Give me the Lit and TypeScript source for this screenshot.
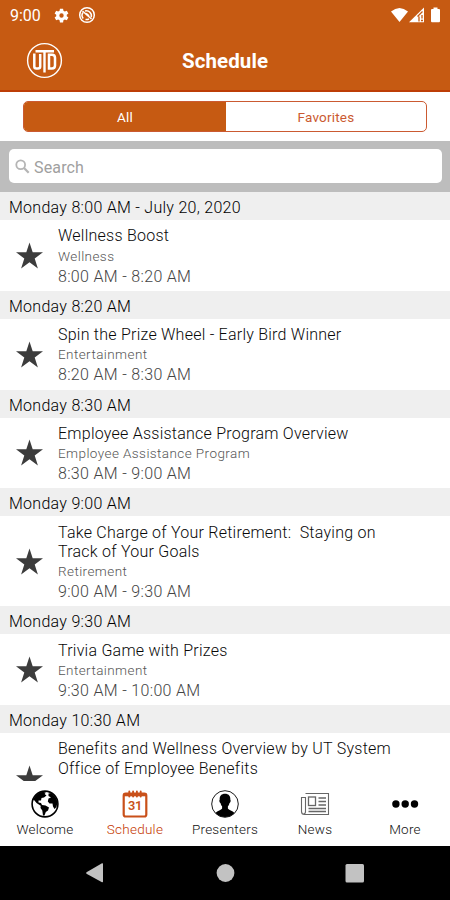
import { LitElement, html, css, svg } from "lit";
import { customElement, property } from "lit/decorators.js";

interface Session {
  slot: string;
  title: string[];
  category: string;
  time: string;
}

const SESSIONS: Session[] = [
  { slot: "Monday 8:00 AM - July 20, 2020", title: ["Wellness Boost"], category: "Wellness", time: "8:00 AM - 8:20 AM" },
  { slot: "Monday 8:20 AM", title: ["Spin the Prize Wheel - Early Bird Winner"], category: "Entertainment", time: "8:20 AM - 8:30 AM" },
  { slot: "Monday 8:30 AM", title: ["Employee Assistance Program Overview"], category: "Employee Assistance Program", time: "8:30 AM - 9:00 AM" },
  { slot: "Monday 9:00 AM", title: ["Take Charge of Your Retirement:\u00a0 Staying on", "Track of Your Goals"], category: "Retirement", time: "9:00 AM - 9:30 AM" },
  { slot: "Monday 9:30 AM", title: ["Trivia Game with Prizes"], category: "Entertainment", time: "9:30 AM - 10:00 AM" },
  { slot: "Monday 10:30 AM", title: ["Benefits and Wellness Overview by UT System", "Office of Employee Benefits"], category: "", time: "" },
];

const TAB_ICONS: Record<string, unknown> = {
  Welcome: svg`<circle cx="15" cy="14" r="12.9" fill="#fff" stroke="#000" stroke-width="1.6"/>
    <path d="M3 9.5C5 5.5 8 2.600 12.500 1.700L16 2.500L14.600 4L16.500 5.500L14 7.500L11.500 8L11 10.500L8.500 10.500L8.500 12.500L11 13L12 15L15.500 15.500L19 17.500L18 20.500L15.800 22L14.500 25.500L13 25.500L12.300 20.500L10.500 18L10.700 15.800L6.500 13L4.500 10.500Z" fill="#000"/>
    <path d="M18.500 3.500L21.500 3L25.500 7L27.600 12L26.500 17L24.500 19L23 16.500L22.500 13.500L19.500 13.500L17.800 11.500L18.500 8.500L21 7.500L18.500 6Z" fill="#000"/>`,
  Schedule: svg`<rect x="3.700" y="3.700" width="22.600" height="22.800" rx="2" fill="#fff" stroke="#c9501a" stroke-width="2.200"/>
    <path d="M3.500 3.500h23v2.800h-23z" fill="#c9501a"/>
    <path d="M9.300 1.500v5M13.100 1.500v5M16.900 1.500v5M20.700 1.500v5" stroke="#c9501a" stroke-width="1.900" stroke-linecap="round"/>
    <text x="15" y="20" text-anchor="middle" font-family="Roboto, sans-serif" font-weight="600" font-size="12.800" letter-spacing="-.3" fill="#c9501a">31</text>`,
  Presenters: svg`<circle cx="15" cy="14" r="13.300" fill="#fff" stroke="#000" stroke-width=".9"/>
    <path d="M15 3.800c-3.900 0-5.600 2.500-5.300 6-.7.300-.3 2.700.8 3.100.3 1.600.9 2.700 1.600 3.400v2.200c-.8 1.700-4.700 2-6.600 4.500a13.200 13.200 0 0 0 19 0c-1.900-2.500-5.800-2.800-6.600-4.500v-2.200c.7-.7 1.300-1.800 1.600-3.400 1.100-.4 1.500-2.800.8-3.100.3-3.500-1.400-6-5.300-6z" fill="#000"/>`,
  News: svg`<g fill="none" stroke="#666" stroke-width="1.100"><path d="M5.500 3.500H28.500V24.500H4.500Q1.500 24.500 1.500 21.500V7.500H5.500V21.500Q5.500 24 3.500 24"/>
    <rect x="8.500" y="7" width="7" height="8.500" stroke-width="1.300"/>
    <path stroke-width="1.300" d="M18.500 8H26M18.500 11.500H26M18.500 15H26M8.500 18.500H26M8.500 21.500H26"/></g>`,
  More: svg`<g fill="#000"><circle cx="5.900" cy="14" r="3.700"/><circle cx="15.200" cy="14" r="3.700"/><circle cx="24.500" cy="14" r="3.700"/></g>`,
};

@customElement("session-row")
class SessionRow extends LitElement {
  @property({ attribute: false }) session!: Session;

  static styles = css`
    :host { display: block; flex: none; font-weight: 300; }
    .slot { height: 28px; line-height: 31px; padding-left: 9px; background: #efefef; color: #000; font-size: 16px; letter-spacing: 0.28px; white-space: nowrap; }
    .row { display: flex; align-items: center; padding-left: 14.500px; }
    .star { width: 29px; height: 28px; flex: none; margin-right: 14.500px; margin-top: 1px; }
    .text { padding: 6.300px 0 2.800px; white-space: nowrap; }
    .title { font-size: 16px; line-height: 19.200px; color: #080808; letter-spacing: 0.24px; }
    .category { font-size: 13.500px; line-height: 20px; min-height: 20px; color: #555; letter-spacing: 0.42px; }
    .time { font-size: 16px; line-height: 22.500px; min-height: 22.500px; color: #444; letter-spacing: 0.32px; }
  `;

  render() {
    const s = this.session;
    return html`
      <div class="slot">${s.slot}</div>
      <div class="row">
        <svg class="star" viewBox="0 0 29 28">
          <path fill="#3c3c3c" d="M14.500 .5L17.700 10.300H28L19.700 16.400L22.900 26.500L14.500 20.300L6.100 26.500L9.300 16.400L1 10.300H11.300Z"/>
        </svg>
        <div class="text">
          ${s.title.map((line) => html`<div class="title">${line}</div>`)}
          <div class="category">${s.category}</div>
          <div class="time">${s.time}</div>
        </div>
      </div>`;
  }
}

@customElement("app-root")
class AppRoot extends LitElement {
  static styles = css`
    :host { display: flex; flex-direction: column; width: 450px; height: 900px; overflow: hidden; background: #fff; font-family: Roboto, "Noto Sans", sans-serif; }
    .status { flex: none; height: 30px; display: flex; align-items: center; padding: 0 8px 0 10px; background: #c65a12; color: #fff; font-size: 16px; }
    .clock { width: 44px; }
    .gear { width: 15px; height: 15px; }
    .dnd { width: 18px; height: 18px; margin-left: 9px; }
    .signals { width: 54px; height: 18px; margin-left: auto; }
    .header { flex: none; height: 62px; box-sizing: border-box; display: grid; grid-template-columns: 1fr auto 1fr; align-items: center; padding: 0 26px; background: #c65a12; border-bottom: 2px solid #bd3e06; color: #fff; }
    .logo { width: 37px; height: 37px; }
    .heading { font-size: 20.500px; font-weight: 700; letter-spacing: 0.1px; padding: 2px 0 0; }
    .filter { flex: none; height: 49px; display: flex; justify-content: center; align-items: center; }
    .segments { display: flex; width: 404px; height: 31px; box-sizing: border-box; border: 1px solid #cb5a31; border-radius: 5px; overflow: hidden; font-size: 13.500px; }
    .segment { width: 199px; flex: 1 1 auto; display: flex; align-items: center; justify-content: center; color: #cb5a31; letter-spacing: 0.2px; }
    .segment.active { width: 201px; background: #c65a12; color: #fff; }
    .search { flex: none; height: 51px; box-sizing: border-box; padding: 8px 8px 9px 9px; background: #bdbdbd; }
    .field { height: 34px; display: flex; align-items: center; padding: 2px 0 0 6px; box-sizing: border-box; background: #fff; border-radius: 5px; color: #a0a0a0; font-size: 16px; letter-spacing: 0.15px; }
    .lens { width: 15px; height: 15px; margin: -2px 4px 0 0; }
    .list { flex: 1; min-height: 0; overflow: hidden; display: flex; flex-direction: column; }
    .tabs { flex: none; height: 65px; display: grid; grid-template-columns: repeat(5, 1fr); background: #fff; }
    .tab { display: flex; flex-direction: column; align-items: center; padding-top: 9px; color: #111; font-size: 13.500px; letter-spacing: 0.25px; font-weight: 300; }
    .tab.active { color: #c43600; }
    .tab-icon { width: 30px; height: 28px; }
    .tab-label { line-height: 20px; margin-top: 1px; }
    .system { flex: none; height: 54px; background: #000; }
    .keys { display: block; width: 450px; height: 54px; }
  `;

  render() {
    return html`
      <div class="status">
        <span class="clock">9:00</span>
        <svg class="gear" viewBox="0 0 24 24"><path fill="#fff" fill-rule="evenodd" d="M9.500 1h5l.6 3.300 2.200 1.300 3.200-1.200 2.500 4.300-2.600 2.200v2.200l2.600 2.200-2.500 4.300-3.200-1.200-2.200 1.300-.6 3.300h-5l-.6-3.300-2.200-1.300-3.200 1.200L1 15.300l2.600-2.200v-2.200L1 8.700l2.500-4.300 3.200 1.200 2.200-1.300zM12 8.500a3.500 3.500 0 1 0 0 7 3.500 3.500 0 0 0 0-7z"/></svg>
        <svg class="dnd" viewBox="0 0 18 18" fill="none" stroke="#fff"><circle cx="9" cy="9" r="7.300" stroke-width="1.500"/><path d="M5.200 12.500A5 5 0 0 1 5 6.500M7 5a5 5 0 0 1 6.200 6.200M7.500 13.500a4.500 4.500 0 0 0 3.500-.7" stroke-width="1.500"/><path d="M4.500 5L13.500 13" stroke-width="1.500"/><path d="M8 7.500L11 10" stroke-width="1.800"/></svg>
        <svg class="signals" viewBox="0 0 54 18">
          <path fill="#fff" d="M3 5.500Q11.500-1.500 20 5.500L11.500 16Z"/>
          <path fill="#fff" d="M21 16.200L36 1.500V16.200Z"/>
          <path fill="none" stroke="#c65a12" stroke-width="1.300" d="M29.500 10.500L34.500 5.500M31 10.500V15.500M34 9V12.500M33 14.500H35"/>
          <path fill="#fff" d="M43 4Q43 3 44 3H45.500V1.500H49.500V3H51Q52 3 52 4V15Q52 16.200 51 16.200H44Q43 16.200 43 15Z"/>
        </svg>
      </div>
      <div class="header">
        <svg class="logo" viewBox="0 0 37 37" fill="none" stroke="#fff">
          <circle cx="18.500" cy="18.500" r="16.900" stroke-width="1.400"/>
          <path d="M8.300 11.500V24.500Q8.300 26.500 10.300 26.500H12Q14.200 26.500 14.200 24.500V12" stroke-width="2.500"/>
          <path d="M9.500 9.200H28M18.500 9V30.500" stroke-width="2.400"/>
          <path d="M23 12.700V26.500H26Q29 26.500 29 23.500V15.700Q29 12.700 26 12.700Z" stroke-width="2.500"/>
        </svg>
        <div class="heading">Schedule</div>
      </div>
      <div class="filter">
        <div class="segments">
          <div class="segment active">All</div>
          <div class="segment">Favorites</div>
        </div>
      </div>
      <div class="search">
        <div class="field">
          <svg class="lens" viewBox="0 0 15 15" fill="none" stroke="#b5b5b5"><circle cx="5.700" cy="5.700" r="4.400" stroke-width="1.800"/><path d="M9 9L13.700 13.700" stroke-width="2.300"/></svg>
          <span>Search</span>
        </div>
      </div>
      <div class="list">${SESSIONS.map((s) => html`<session-row .session=${s}></session-row>`)}</div>
      <div class="tabs">
        ${Object.keys(TAB_ICONS).map((name) => html`
          <div class="tab ${name === "Schedule" ? "active" : ""}">
            <svg class="tab-icon" viewBox="0 0 30 28">${TAB_ICONS[name]}</svg>
            <span class="tab-label">${name}</span>
          </div>`)}
      </div>
      <div class="system">
        <svg class="keys" viewBox="0 0 450 54" fill="#c2c2c2">
          <path d="M86.500 26.200L102 17.300Q103 17 103 18V35.500Q103 36.500 102 36.200L86.500 27.800Q85.800 27 86.500 26.200Z"/>
          <circle cx="225.500" cy="27" r="8.900"/>
          <rect x="345.500" y="18" width="18.500" height="18.500" rx="1.500"/>
        </svg>
      </div>`;
  }
}
